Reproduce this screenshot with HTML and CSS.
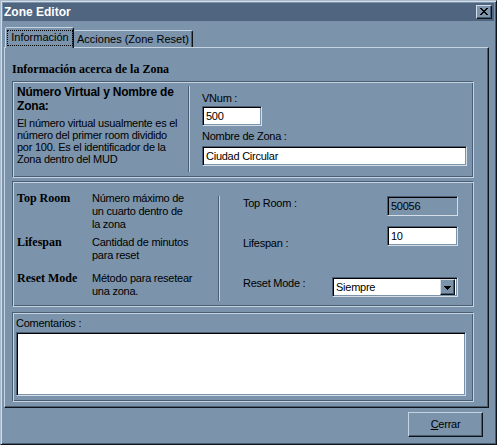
FILE: index.html
```html
<!DOCTYPE html>
<html>
<head>
<meta charset="utf-8">
<link rel="stylesheet" href="styles.css">
</head>
<body>
<div class="window">
  <div class="titlebar">
    <span class="title">Zone Editor</span>
    <span class="close raised">
      <svg width="8" height="7" viewBox="0 0 8 7" shape-rendering="crispEdges">
        <rect x="0" y="0" width="2" height="1" fill="#000"/><rect x="6" y="0" width="2" height="1" fill="#000"/>
        <rect x="1" y="1" width="2" height="1" fill="#000"/><rect x="5" y="1" width="2" height="1" fill="#000"/>
        <rect x="2" y="2" width="4" height="1" fill="#000"/>
        <rect x="3" y="3" width="2" height="1" fill="#000"/>
        <rect x="2" y="4" width="4" height="1" fill="#000"/>
        <rect x="1" y="5" width="2" height="1" fill="#000"/><rect x="5" y="5" width="2" height="1" fill="#000"/>
        <rect x="0" y="6" width="2" height="1" fill="#000"/><rect x="6" y="6" width="2" height="1" fill="#000"/>
      </svg>
    </span>
  </div>
  <div class="tabs">
    <div class="tab tab-active"><span class="focus">Información</span></div>
    <div class="tab tab-other">Acciones (Zone Reset)</div>
  </div>
  <div class="panel">
    <div class="heading serif">Información acerca de la Zona</div>

    <div class="frame f1">
      <div class="f1-left">
        <div class="bold-title">Número Virtual y Nombre de<br>Zona:</div>
        <div class="desc">El número virtual usualmente es el<br>número del primer room dividido<br>por 100. Es el identificador de la<br>Zona dentro del MUD</div>
      </div>
      <div class="vsep vsep1"></div>
      <div class="f1-right">
        <div class="lbl lbl-vnum">VNum :</div>
        <div class="input w-vnum">500</div>
        <div class="lbl lbl-nombre">Nombre de Zona :</div>
        <div class="input w-nombre">Ciudad Circular</div>
      </div>
    </div>

    <div class="frame f2">
      <div class="f2-left">
        <div class="info-row r1">
          <div class="serif key">Top Room</div>
          <div class="val">Número máximo de<br>un cuarto dentro de<br>la zona</div>
        </div>
        <div class="info-row r2">
          <div class="serif key">Lifespan</div>
          <div class="val">Cantidad de minutos<br>para reset</div>
        </div>
        <div class="info-row r3">
          <div class="serif key">Reset Mode</div>
          <div class="val">Método para resetear<br>una zona.</div>
        </div>
      </div>
      <div class="vsep vsep2"></div>
      <div class="f2-right">
        <div class="ctl-row ra">
          <div class="lbl la">Top Room :</div>
          <div class="input readonly w-small">50056</div>
        </div>
        <div class="ctl-row rb">
          <div class="lbl lb">Lifespan :</div>
          <div class="input w-small">10</div>
        </div>
        <div class="ctl-row rc">
          <div class="lbl lc">Reset Mode :</div>
          <div class="input select">
            <span class="sel-text">Siempre</span>
            <span class="drop raised">
              <svg width="7" height="4" viewBox="0 0 7 4" shape-rendering="crispEdges">
                <rect x="0" y="0" width="7" height="1" fill="#000"/>
                <rect x="1" y="1" width="5" height="1" fill="#000"/>
                <rect x="2" y="2" width="3" height="1" fill="#000"/>
                <rect x="3" y="3" width="1" height="1" fill="#000"/>
              </svg>
            </span>
          </div>
        </div>
      </div>
    </div>

    <div class="frame f3">
      <div class="lbl lbl-com">Comentarios :</div>
      <div class="input textarea"></div>
    </div>
  </div>
  <div class="footer">
    <div class="button raised-btn"><span class="ul">C</span>errar</div>
  </div>
</div>
</body>
</html>
```

FILE: styles.css
```css
html, body {
  margin: 0;
  padding: 0;
  background: #7b93ab;
}

.window {
  width: 497px;
  height: 445px;
  box-sizing: border-box;
  background: #7b93ab;
  border: 1px solid;
  border-color: #a7b9cb #0e141a #0e141a #a7b9cb;
  box-shadow: inset 1px 1px 0 #d3dee9, inset -1px -1px 0 #485c72;
  padding: 2px;
  display: flex;
  flex-direction: column;
  font-family: "Liberation Sans", Arial, sans-serif;
  font-size: 11px;
  letter-spacing: -0.25px;
  color: #000;
}

.serif {
  font-family: "Liberation Serif", "Times New Roman", serif;
  font-weight: bold;
  font-size: 12px;
  letter-spacing: 0;
}

/* Title bar */
.titlebar {
  height: 18px;
  flex: none;
  background: #4f6580;
  display: flex;
  align-items: center;
  justify-content: space-between;
  padding: 0 2px 0 1px;
}

.title {
  color: #fff;
  font-weight: bold;
  font-size: 12px;
  line-height: 14px;
  letter-spacing: 0;
}

.raised {
  box-sizing: border-box;
  background: #7b93ab;
  border: 1px solid;
  border-color: #d3dee9 #0e141a #0e141a #d3dee9;
  box-shadow: inset -1px -1px 0 #485c72;
}

.close {
  width: 16px;
  height: 14px;
  display: flex;
  align-items: center;
  justify-content: center;
  padding-bottom: 1px;
}

.close svg {
  display: block;
}

/* Tabs */
.tabs {
  flex: none;
  display: flex;
  align-items: flex-start;
  margin-top: 6px;
  height: 21px;
  margin-bottom: -1px;
  padding-left: 2px;
  position: relative;
  z-index: 1;
}

.tab {
  box-sizing: border-box;
  background: #7b93ab;
  border-top: 1px solid #c6d4e2;
  border-left: 1px solid #c6d4e2;
  border-right: 1px solid #0e141a;
  box-shadow: inset -1px 0 0 #485c72;
  border-radius: 2px 2px 0 0;
  line-height: 13px;
  letter-spacing: 0;
}

.tab-active {
  width: 69px;
  height: 21px;
  padding: 2px 0 0 1px;
}

.focus {
  display: flex;
  align-items: center;
  justify-content: center;
  box-sizing: border-box;
  width: 66px;
  height: 16px;
  border: 1px dotted #000;
  padding-bottom: 1px;
}

.tab-other {
  width: 119px;
  height: 17px;
  margin-top: 3px;
  padding: 2px 0 0 3px;
  border-left: none;
}

/* Panel */
.panel {
  flex: none;
  margin-left: 1px;
  width: 485px;
  height: 361px;
  box-sizing: border-box;
  border-top: 1px solid #c6d4e2;
  border-left: 1px solid #c6d4e2;
  border-right: 1px solid #0e141a;
  border-bottom: 1px solid #0e141a;
  box-shadow: inset -1px -1px 0 #485c72;
  padding: 14px 0 0 7px;
  display: flex;
  flex-direction: column;
}

.heading {
  height: 14px;
  line-height: 14px;
}

.frame {
  box-sizing: border-box;
  width: 462px;
  border: 1px solid;
  border-color: #4a5f76 #c6d4e2 #c6d4e2 #4a5f76;
  box-shadow: inset 1px 1px 0 #c6d4e2, inset -1px -1px 0 #4a5f76;
  padding: 1px;
}

.vsep {
  box-sizing: border-box;
  width: 2px;
  border-left: 1px solid #4a5f76;
  border-right: 1px solid #c6d4e2;
}

/* Frame 1 */
.f1 {
  margin-top: 5px;
  height: 97px;
  display: grid;
  grid-template-columns: 174px 2px 1fr;
  align-items: start;
}

.f1-left {
  padding: 2px 0 0 3px;
}

.bold-title {
  font-weight: bold;
  font-size: 12px;
  line-height: 14px;
  letter-spacing: -0.2px;
}

.desc {
  margin-top: 4px;
  line-height: 12px;
}

.vsep1 {
  margin-top: 3px;
  height: 86px;
}

.f1-right {
  padding: 9px 0 0 12px;
  display: flex;
  flex-direction: column;
  align-items: flex-start;
}

.lbl {
  line-height: 13px;
  white-space: nowrap;
}

.lbl-nombre {
  margin-top: 4px;
}

.input {
  box-sizing: border-box;
  height: 20px;
  background: #fff;
  border: 1px solid;
  border-color: #4a5f76 #d3dee9 #d3dee9 #4a5f76;
  box-shadow: inset 1px 1px 0 #000, inset -1px -1px 0 #7b93ab;
  padding: 0 0 0 3px;
  line-height: 18px;
  white-space: nowrap;
}

.w-vnum {
  margin-top: 1px;
  width: 60px;
}

.w-nombre {
  margin-top: 3px;
  width: 265px;
}

/* Frame 2 */
.f2 {
  margin-top: 3px;
  height: 126px;
  display: grid;
  grid-template-columns: 204px 2px 1fr;
  align-items: start;
}

.f2-left {
  padding: 9px 0 0 3px;
}

.info-row {
  display: grid;
  grid-template-columns: 75px 1fr;
  line-height: 13px;
}

.key {
  line-height: 13px;
  white-space: nowrap;
}

.val {
  white-space: nowrap;
}

.r2 {
  margin-top: 5px;
}

.r3 {
  margin-top: 10px;
}

.vsep2 {
  margin-top: 13px;
  height: 105px;
}

.f2-right {
  padding: 13px 14px 0 23px;
  display: flex;
  flex-direction: column;
}

.ctl-row {
  display: flex;
  justify-content: space-between;
  align-items: flex-start;
}

.la {
  margin-top: 1px;
}

.rb {
  margin-top: 10px;
}

.lb {
  margin-top: 11px;
}

.rc {
  margin-top: 27px;
}

.w-small {
  width: 71px;
}

.readonly {
  background: #7b93ab;
}

.select {
  width: 126px;
  display: flex;
  justify-content: space-between;
  align-items: center;
  padding: 2px 2px 2px 3px;
}

.sel-text {
  line-height: 14px;
}

.drop {
  width: 15px;
  height: 16px;
  display: flex;
  align-items: center;
  justify-content: center;
  padding-top: 1px;
}

.drop svg {
  display: block;
}

/* Frame 3 */
.f3 {
  margin-top: 5px;
  height: 90px;
  padding: 1px 1px 1px 3px;
}

.lbl-com {
  padding-top: 3px;
}

.textarea {
  margin-top: 2px;
  width: 450px;
  height: 64px;
}

/* Footer */
.footer {
  flex: none;
  display: flex;
  justify-content: flex-end;
  padding-right: 11px;
  margin-top: 4px;
}

.button {
  width: 75px;
  height: 25px;
  display: flex;
  align-items: center;
  justify-content: center;
  line-height: 13px;
}

.raised-btn {
  box-sizing: border-box;
  background: #7b93ab;
  border: 1px solid;
  border-color: #c6d4e2 #0e141a #0e141a #c6d4e2;
  box-shadow: inset -1px -1px 0 #485c72;
}

.ul {
  text-decoration: underline;
}
```
